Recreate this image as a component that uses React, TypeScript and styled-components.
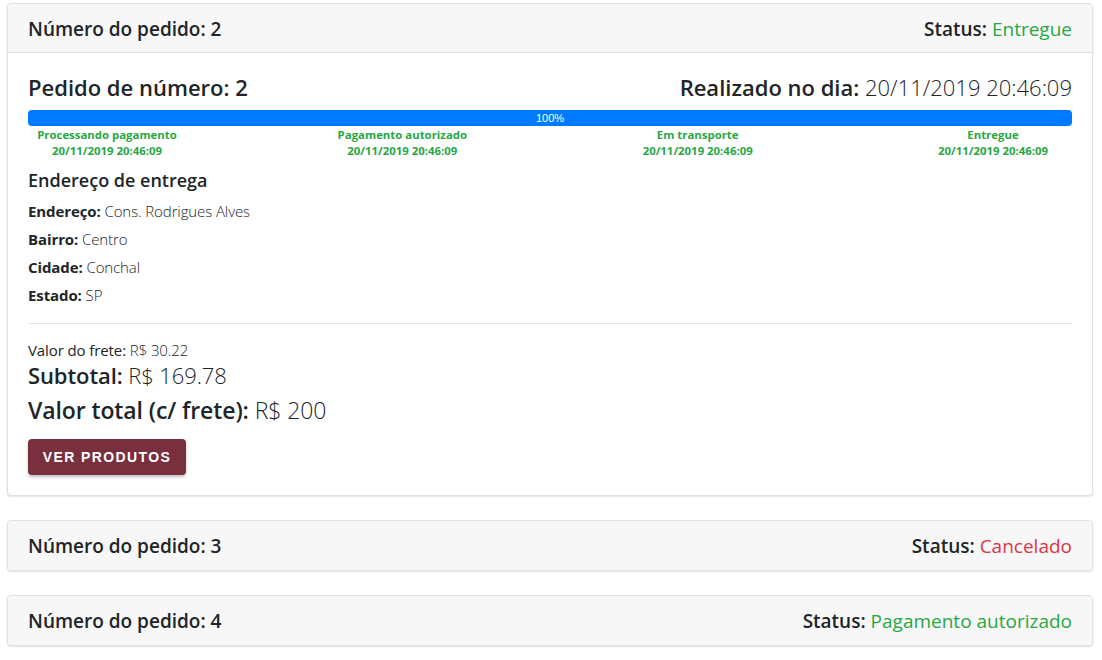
import React from "react";
import styled, { createGlobalStyle } from "styled-components";

const Global = createGlobalStyle`
  html, body { margin: 0; padding: 0; background: #fff; }
  body { font-family: "Open Sans", "Noto Sans", sans-serif; color: #212529; }
  * { box-sizing: border-box; }
`;

const Page = styled.div`
  padding: 3px 9px 20px 7px;
  display: flex;
  flex-direction: column;
  gap: 24px;
`;

const Card = styled.section`
  border: 1px solid #e0e0e0;
  border-radius: 4px;
  background: #fff;
  box-shadow: 0 1px 2px rgba(0, 0, 0, 0.12);
  overflow: hidden;
`;

const Header = styled.header<{ $open?: boolean }>`
  display: flex;
  justify-content: space-between;
  align-items: center;
  height: ${(p) => (p.$open ? "49px" : "49px")};
  padding: 1px 20px 0;
  background: #f7f7f7;
  border-bottom: ${(p) => (p.$open ? "1px solid #dedede" : "none")};
  font-size: 19px;
  font-weight: 600;
`;

const StatusValue = styled.span<{ $tone: "ok" | "bad" }>`
  color: ${(p) => (p.$tone === "ok" ? "#28a745" : "#dc3545")};
  font-weight: 500;
`;

const Body = styled.div`
  padding: 18px 20px 20px;
`;

const TitleRow = styled.div`
  display: flex;
  justify-content: space-between;
  align-items: baseline;
  line-height: 32px;
`;

const Title = styled.h2`
  margin: 0;
  font-size: 22px;
  font-weight: 600;
`;

const Light = styled.span`
  font-weight: 300;
`;

const Progress = styled.div`
  margin-top: 7px;
  height: 16px;
  border-radius: 4px;
  background: #e9ecef;
  overflow: hidden;
  display: flex;
`;

const ProgressFill = styled.div`
  background: #007bff;
  color: #fff;
  font-size: 11px;
  line-height: 16px;
  text-align: center;
  font-family: "Liberation Sans", Arial, sans-serif;
`;

const Steps = styled.div`
  display: grid;
  grid-template-columns: repeat(4, 158px);
  justify-content: space-between;
  margin-top: 1px;
`;

const Step = styled.div`
  text-align: center;
  color: #28a745;
  font-size: 11.4px;
  font-weight: 700;
  line-height: 16px;
  white-space: nowrap;
`;

const Section = styled.h3`
  margin: 9px 0 5px;
  font-size: 18px;
  font-weight: 600;
  line-height: 24px;
`;

const Line = styled.p`
  margin: 0;
  font-size: 15px;
  line-height: 28px;
  letter-spacing: -0.1px;
  b { font-weight: 700; }
`;

const Divider = styled.hr`
  border: 0;
  border-top: 1px solid #e5e5e5;
  margin: 14px 0 16px;
`;

const Amount = styled.div<{ $size: number; $lh: number; $weight?: number }>`
  font-size: ${(p) => p.$size}px;
  line-height: ${(p) => p.$lh}px;
  font-weight: ${(p) => p.$weight ?? 600};
  letter-spacing: -0.1px;
`;

const Button = styled.button`
  display: block;
  margin-top: 9px;
  height: 36px;
  width: 158px;
  border: 0;
  border-radius: 4px;
  background: #7a2f3f;
  color: #fff;
  font-family: "Liberation Sans", Arial, sans-serif;
  font-weight: 700;
  font-size: 14px;
  letter-spacing: 1.4px;
  text-transform: uppercase;
  box-shadow: 0 2px 3px rgba(0, 0, 0, 0.25);
  cursor: pointer;
`;

const date = "20/11/2019 20:46:09";
const steps = ["Processando pagamento", "Pagamento autorizado", "Em transporte", "Entregue"];

const StatusHeader: React.FC<{ n: number; status: string; tone: "ok" | "bad"; open?: boolean }> = ({ n, status, tone, open }) => (
  <Header $open={open}>
    <span>Número do pedido: {n}</span>
    <span>
      Status: <StatusValue $tone={tone}>{status}</StatusValue>
    </span>
  </Header>
);

export default function App() {
  return (
    <>
      <Global />
      <Page>
        <Card>
          <StatusHeader n={2} status="Entregue" tone="ok" open />
          <Body>
            <TitleRow>
              <Title>Pedido de número: 2</Title>
              <Title>
                Realizado no dia: <Light>{date}</Light>
              </Title>
            </TitleRow>
            <Progress>
              <ProgressFill style={{ width: "100%" }}>100%</ProgressFill>
            </Progress>
            <Steps>
              {steps.map((s) => (
                <Step key={s}>
                  {s}
                  <br />
                  {date}
                </Step>
              ))}
            </Steps>
            <Section>Endereço de entrega</Section>
            <Line><b>Endereço:</b> <Light>Cons. Rodrigues Alves</Light></Line>
            <Line><b>Bairro:</b> <Light>Centro</Light></Line>
            <Line><b>Cidade:</b> <Light>Conchal</Light></Line>
            <Line><b>Estado:</b> <Light>SP</Light></Line>
            <Divider />
            <Amount $size={15} $lh={20} $weight={500}>Valor do frete: <Light>R$ 30.22</Light></Amount>
            <Amount $size={22} $lh={30}>Subtotal: <Light>R$ 169.78</Light></Amount>
            <Amount $size={23} $lh={40}>Valor total (c/ frete): <Light>R$ 200</Light></Amount>
            <Button>Ver produtos</Button>
          </Body>
        </Card>
        <Card>
          <StatusHeader n={3} status="Cancelado" tone="bad" />
        </Card>
        <Card>
          <StatusHeader n={4} status="Pagamento autorizado" tone="ok" />
        </Card>
      </Page>
    </>
  );
}
